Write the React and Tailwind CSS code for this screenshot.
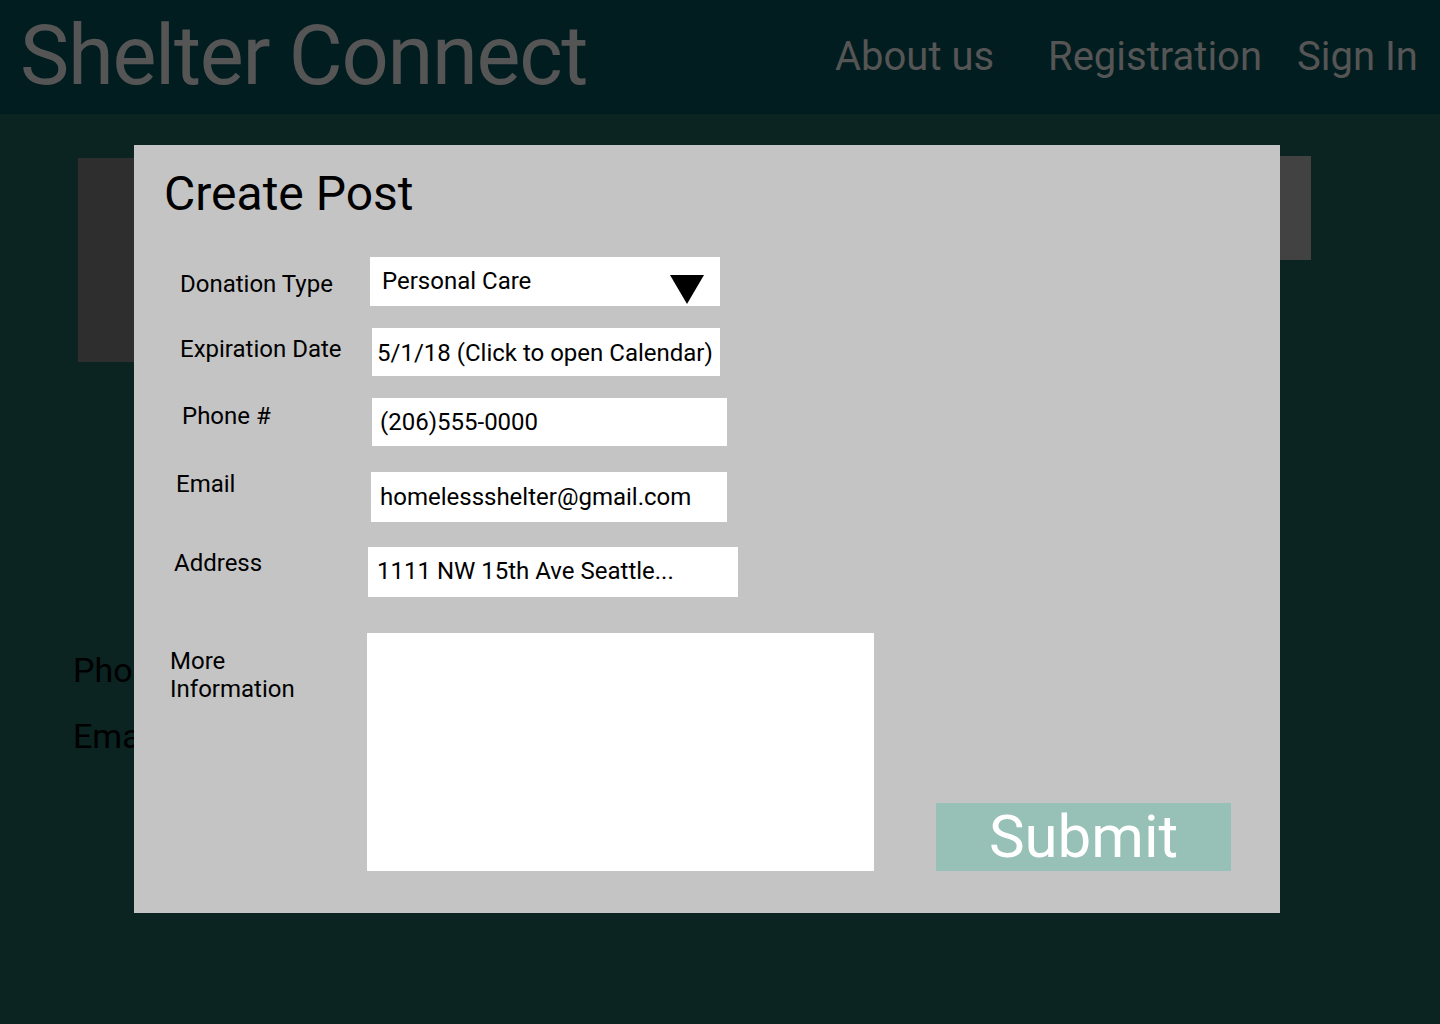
const font = { fontFamily: 'Roboto, "Open Sans", sans-serif' };

function Field({ label, labelCls, boxCls, textCls, children, extra }) {
  return (
    <div className="flex items-start">
      <div className={`w-[230px] shrink-0 text-[24px] leading-none text-black ${labelCls}`}>{label}</div>
      <div className={`flex bg-white ${boxCls}`}>
        <span className={`self-center text-[24px] leading-none text-black whitespace-nowrap ${textCls}`}>{children}</span>
        {extra}
      </div>
    </div>
  );
}

export default function App() {
  return (
    <div className="relative w-[1440px] h-[1024px] overflow-hidden bg-[#0b2321]" style={font}>
      {/* top bar */}
      <header className="flex items-start h-[114px] bg-[#021d1f] text-[#555555]">
        <div className="w-[835px] shrink-0 pl-[20px] pt-[14px] text-[83px] leading-none tracking-[-1.3px] whitespace-nowrap">Shelter Connect</div>
        <nav className="flex pt-[37px] text-[40px] leading-none whitespace-nowrap">
          <a className="w-[213px]">About us</a>
          <a className="w-[249px]">Registration</a>
          <a>Sign In</a>
        </nav>
      </header>

      {/* page behind the dialog */}
      <div className="flex items-start">
        <div className="ml-[78px] mt-[44px] w-[560px] h-[204px] bg-[#2e2e2e]" />
        <div className="ml-auto mr-[129px] mt-[42px] w-[300px] h-[104px] bg-[#424242]" />
      </div>
      <div className="pl-[73px] mt-[291px] text-[34px] leading-none text-black">
        <p>Phone</p>
        <p className="mt-[32px]">Email</p>
      </div>

      {/* dialog */}
      <div className="absolute left-[134px] top-[145px] w-[1146px] h-[768px] bg-[#c4c4c4]">
        <h1 className="pl-[30px] pt-[25px] h-[74px] text-[48px] leading-none text-black">Create Post</h1>

        <div className="mt-[38px] flex flex-col">
          <Field
            label="Donation Type"
            labelCls="pl-[46px] pt-[15px] mr-[6px]"
            boxCls="w-[350px] h-[49px] justify-between"
            textCls="pl-[12px] -mt-[2px]"
            extra={
              <svg className="self-end mb-[2px] mr-[16px]" width="34" height="29" viewBox="0 0 34 29">
                <polygon points="0,0 34,0 17,29" fill="#000" />
              </svg>
            }
          >
            Personal Care
          </Field>

          <div className="mt-[22px]">
            <Field
              label="Expiration Date"
              labelCls="pl-[46px] pt-[9px] mr-[8px]"
              boxCls="w-[348px] h-[48px]"
              textCls="pl-[5px] mt-[2px]"
            >
              5/1/18 (Click to open Calendar)
            </Field>
          </div>

          <div className="mt-[22px]">
            <Field
              label="Phone #"
              labelCls="pl-[48px] pt-[6px] mr-[8px]"
              boxCls="w-[355px] h-[48px]"
              textCls="pl-[8px]"
            >
              (206)555-0000
            </Field>
          </div>

          <div className="mt-[26px]">
            <Field
              label="Email"
              labelCls="pl-[42px] pt-[0px] mr-[7px]"
              boxCls="w-[356px] h-[50px]"
              textCls="pl-[9px]"
            >
              homelessshelter@gmail.com
            </Field>
          </div>

          <div className="mt-[25px]">
            <Field
              label="Address"
              labelCls="pl-[40px] pt-[4px] mr-[4px]"
              boxCls="w-[370px] h-[50px]"
              textCls="pl-[9px] -mt-[3px]"
            >
              1111 NW 15th Ave Seattle...
            </Field>
          </div>

          <div className="mt-[36px] flex items-end">
            <div className="flex items-start">
              <div className="w-[230px] shrink-0 mr-[3px] pl-[36px] pt-[14px] text-[24px] leading-[28px] text-black">
                More
                <br />
                Information
              </div>
              <textarea className="w-[507px] h-[238px] bg-white resize-none outline-none p-2 text-[20px]" />
            </div>
            <button className="ml-[62px] w-[295px] h-[68px] bg-[#97c1b6] text-white text-[60px] leading-none">
              Submit
            </button>
          </div>
        </div>
      </div>
    </div>
  );
}
